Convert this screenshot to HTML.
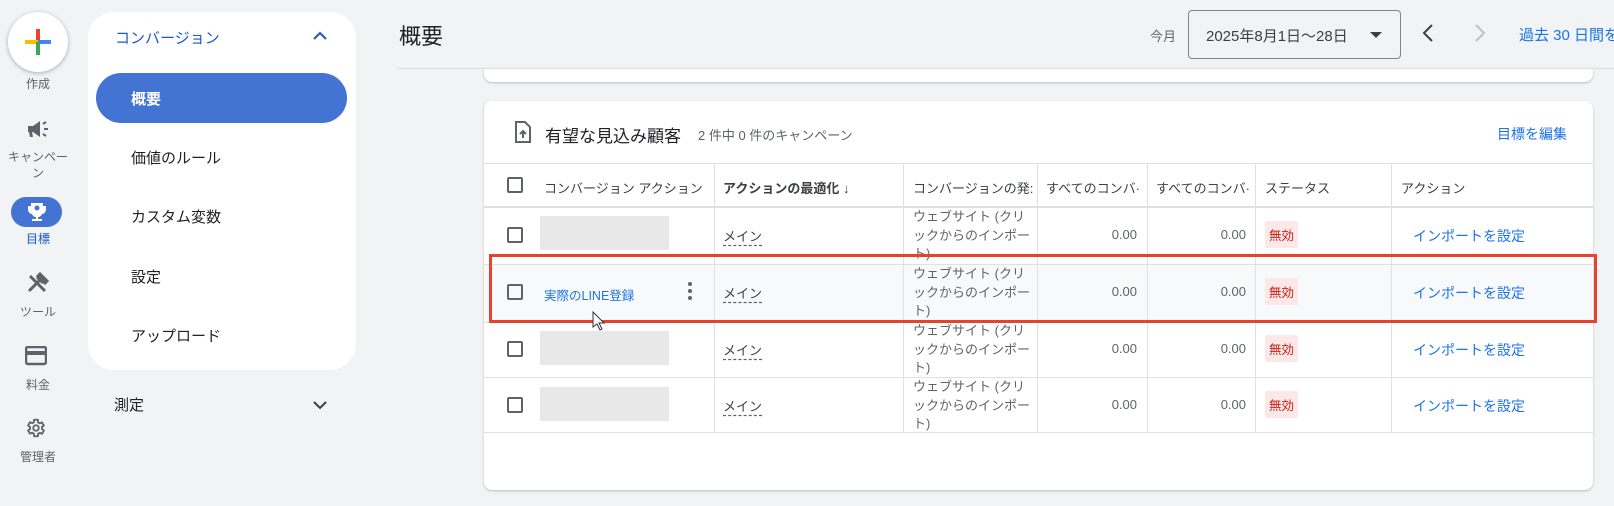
<!DOCTYPE html>
<html><head><meta charset="utf-8">
<style>
*{box-sizing:border-box;margin:0;padding:0}
body{width:1614px;height:506px;overflow:hidden;background:#f1f3f4;font-family:"Liberation Sans","Noto Sans CJK JP",sans-serif;color:#3c4043;position:relative}
.a{position:absolute}
.t{position:absolute;white-space:nowrap}
.lbl{font-size:12px;color:#5f6368;text-align:center;width:76px;left:0}
.nav{left:88px;top:12px;width:268px;height:358px;background:#fff;border-radius:26px}
.item{font-size:15px;color:#202124;left:131px}
.card{background:#fff;border-radius:8px;box-shadow:0 1px 2px rgba(60,64,67,.3)}
.hl{position:absolute;left:484px;width:1109px;height:1px;background:#e0e0e0}
.vl{position:absolute;width:1px;background:#e0e0e0}
.cb{position:absolute;width:16px;height:16px;border:2px solid #5f6368;border-radius:2px;left:507px}
.th{font-size:13px;color:#3c4043}
.td{font-size:13px;color:#3c4043}
.web{font-size:13px;color:#5f6368;line-height:18.5px;white-space:normal;width:118px;word-break:break-all}
.num{font-size:13px;color:#5f6368;text-align:right}
.badge{position:absolute;background:#fce8e6;color:#c5221f;font-size:12.5px;padding:4px 4px;border-radius:2px}
.imp{font-size:14px;color:#1a73e8}
.main{text-decoration:underline dashed #5f6368;text-underline-offset:4px}
.ph{position:absolute;left:540px;width:129px;height:34px;background:#e8e8e8}
</style></head><body>

<!-- left rail -->
<div class="a" style="left:8px;top:12px;width:60px;height:60px;border-radius:50%;background:#fff;box-shadow:0 1px 4px rgba(0,0,0,.3)"></div>
<div class="a" style="left:36px;top:29px;width:4px;height:13px;background:#ea4335"></div>
<div class="a" style="left:25px;top:40px;width:13px;height:4px;background:#fbbc04"></div>
<div class="a" style="left:38px;top:40px;width:13px;height:4px;background:#4285f4"></div>
<div class="a" style="left:36px;top:42px;width:4px;height:13px;background:#34a853"></div>
<div class="t lbl" style="top:75px">作成</div>
<svg class="a" style="left:26px;top:120px" width="24" height="20" viewBox="0 0 24 20"><path d="M2 6h5l7-5v16l-7-5H6l1 5H4l-1-5H2z" fill="#5f6368"/><path d="M17 4l3-2M18 9h4M17 14l3 2" stroke="#5f6368" stroke-width="2"/></svg>
<div class="t lbl" style="top:149px;line-height:16px">キャンペー<br>ン</div>
<div class="a" style="left:11px;top:197px;width:51px;height:30px;border-radius:15px;background:#4374d4"></div>
<svg class="a" style="left:26px;top:201px" width="22" height="22" viewBox="0 0 22 22"><path d="M5 2h12v3h3v3c0 3-2 5-4 5-1 2-2 3-4 3v2h4v2H6v-2h4v-2c-2 0-3-1-4-3-2 0-4-2-4-5V5h3z" fill="#fff"/><circle cx="11" cy="7" r="2.5" fill="#4374d4"/></svg>
<div class="t lbl" style="top:230px;color:#1a57c8">目標</div>
<svg class="a" style="left:26px;top:272px" width="24" height="22" viewBox="0 0 24 22"><path d="M3 19L13 9M11 5l6 6M14 2l7 7-2 2-7-7z" stroke="#5f6368" stroke-width="3" fill="none"/><path d="M4 4l15 15" stroke="#5f6368" stroke-width="3"/></svg>
<div class="t lbl" style="top:303px">ツール</div>
<svg class="a" style="left:25px;top:346px" width="22" height="20" viewBox="0 0 22 20"><rect x="1" y="1" width="20" height="17" rx="2" fill="none" stroke="#5f6368" stroke-width="2.5"/><rect x="1" y="5" width="20" height="4" fill="#5f6368"/></svg>
<div class="t lbl" style="top:376px">料金</div>
<svg class="a" style="left:25px;top:417px" width="22" height="22" viewBox="0 0 24 24"><path d="M19.4 13a7.6 7.6 0 000-2l2.1-1.6-2-3.5-2.5 1a7 7 0 00-1.7-1L15 3h-4l-.4 2.7a7 7 0 00-1.7 1l-2.5-1-2 3.5L6.5 11a7.6 7.6 0 000 2l-2.1 1.6 2 3.5 2.5-1a7 7 0 001.7 1L11 21h4l.4-2.7a7 7 0 001.7-1l2.5 1 2-3.5z" fill="none" stroke="#5f6368" stroke-width="2" transform="translate(-1,0)"/><circle cx="12" cy="12" r="3" fill="none" stroke="#5f6368" stroke-width="2"/></svg>
<div class="t lbl" style="top:448px">管理者</div>

<!-- nav -->
<div class="a nav"></div>
<div class="t" style="left:115px;top:27px;font-size:15px;color:#1a57c8">コンバージョン</div>
<svg class="a" style="left:312px;top:31px" width="16" height="10" viewBox="0 0 16 10"><path d="M2 8l6-6 6 6" stroke="#1a57c8" stroke-width="2" fill="none"/></svg>
<div class="a" style="left:96px;top:73px;width:251px;height:50px;border-radius:25px;background:#4374d4"></div>
<div class="t" style="left:131px;top:88px;font-size:15px;color:#fff;font-weight:bold">概要</div>
<div class="t item" style="top:147px">価値のルール</div>
<div class="t item" style="top:206px">カスタム変数</div>
<div class="t item" style="top:266px">設定</div>
<div class="t item" style="top:325px">アップロード</div>
<div class="t" style="left:114px;top:394px;font-size:15px;color:#202124">測定</div>
<svg class="a" style="left:312px;top:400px" width="16" height="10" viewBox="0 0 16 10"><path d="M2 2l6 6 6-6" stroke="#3c4043" stroke-width="2" fill="none"/></svg>

<!-- upper card remnant -->
<div class="a card" style="left:484px;top:69px;width:1109px;height:13px;border-radius:0 0 8px 8px"></div>

<!-- header -->
<div class="t" style="left:399px;top:19px;font-size:22px;color:#202124">概要</div>
<div class="a" style="left:397px;top:68px;width:1217px;height:1px;background:#dadce0"></div>
<div class="t" style="left:1150px;top:26px;font-size:13px;color:#5f6368">今月</div>
<div class="a" style="left:1188px;top:10px;width:213px;height:49px;border:1px solid #80868b;border-radius:4px"></div>
<div class="t" style="left:1206px;top:25px;font-size:15px;color:#3c4043">2025年8月1日〜28日</div>
<div class="a" style="left:1370px;top:32px;border-left:6px solid transparent;border-right:6px solid transparent;border-top:6px solid #3c4043"></div>
<svg class="a" style="left:1421px;top:23px" width="14" height="20" viewBox="0 0 14 20"><path d="M11 2L3 10l8 8" stroke="#3c4043" stroke-width="2" fill="none"/></svg>
<svg class="a" style="left:1473px;top:23px" width="14" height="20" viewBox="0 0 14 20"><path d="M3 2l8 8-8 8" stroke="#bdc1c6" stroke-width="2" fill="none"/></svg>
<div class="t" style="left:1519px;top:24px;font-size:15px;color:#1a73e8">過去 30 日間を</div>

<!-- main card -->
<div class="a card" style="left:484px;top:101px;width:1109px;height:389px"></div>
<svg class="a" style="left:514px;top:121px" width="18" height="22" viewBox="0 0 18 22"><path d="M2 1h9l5 5v15H2z" fill="none" stroke="#5f6368" stroke-width="2"/><path d="M9 17V10M6 13l3-3 3 3" stroke="#5f6368" stroke-width="2" fill="none"/></svg>
<div class="t" style="left:545px;top:122px;font-size:17px;color:#202124">有望な見込み顧客</div>
<div class="t" style="left:698px;top:125px;font-size:13px;color:#5f6368">2 件中 0 件のキャンペーン</div>
<div class="t" style="left:1497px;top:124px;font-size:14px;color:#1a73e8">目標を編集</div>

<div class="a" style="left:484px;top:265px;width:1109px;height:57px;background:#f8f9fa"></div>
<div class="hl" style="top:163px"></div>
<div class="hl" style="top:206px;height:2px"></div>
<div class="hl" style="top:264px"></div>
<div class="hl" style="top:322px"></div>
<div class="hl" style="top:377px"></div>
<div class="hl" style="top:432px"></div>
<div class="vl" style="left:714px;top:163px;height:269px"></div>
<div class="vl" style="left:903px;top:163px;height:269px"></div>
<div class="vl" style="left:1037px;top:163px;height:269px"></div>
<div class="vl" style="left:1147px;top:163px;height:269px"></div>
<div class="vl" style="left:1255px;top:163px;height:269px"></div>
<div class="vl" style="left:1391px;top:163px;height:269px"></div>

<div class="cb" style="top:177px"></div>
<div class="t th" style="left:544px;top:178px">コンバージョン アクション</div>
<div class="t th" style="left:723px;top:178px;font-weight:bold">アクションの最適化 ↓</div>
<div class="t th" style="left:913px;top:178px;width:122px;overflow:hidden">コンバージョンの発:</div>
<div class="t th" style="left:1046px;top:178px;width:96px;overflow:hidden">すべてのコンバ·</div>
<div class="t th" style="left:1156px;top:178px;width:96px;overflow:hidden">すべてのコンバ·</div>
<div class="t th" style="left:1265px;top:178px">ステータス</div>
<div class="t th" style="left:1401px;top:178px">アクション</div>

<!-- rows -->
<div class="cb" style="top:227px"></div><div class="ph" style="top:216px"></div>
<div class="cb" style="top:284px"></div>
<div class="cb" style="top:341px"></div><div class="ph" style="top:331px"></div>
<div class="cb" style="top:397px"></div><div class="ph" style="top:387px"></div>
<div class="t" style="left:544px;top:285px;font-size:12.5px;color:#1a73e8">実際のLINE登録</div>
<svg class="a" style="left:687px;top:281px" width="6" height="20"><circle cx="3" cy="3" r="2" fill="#5f6368"/><circle cx="3" cy="10" r="2" fill="#5f6368"/><circle cx="3" cy="17" r="2" fill="#5f6368"/></svg>

<div class="t td main" style="left:723px;top:283px">メイン</div>
<div class="t td main" style="left:723px;top:226px">メイン</div>
<div class="t td main" style="left:723px;top:340px">メイン</div>
<div class="t td main" style="left:723px;top:396px">メイン</div>

<div class="a web" style="left:913px;top:208px">ウェブサイト (クリックからのインポート)</div>
<div class="a web" style="left:913px;top:265px">ウェブサイト (クリックからのインポート)</div>
<div class="a web" style="left:913px;top:322px">ウェブサイト (クリックからのインポート)</div>
<div class="a web" style="left:913px;top:378px">ウェブサイト (クリックからのインポート)</div>

<div class="t num" style="left:1077px;width:60px;top:227px">0.00</div><div class="t num" style="left:1186px;width:60px;top:227px">0.00</div>
<div class="t num" style="left:1077px;width:60px;top:284px">0.00</div><div class="t num" style="left:1186px;width:60px;top:284px">0.00</div>
<div class="t num" style="left:1077px;width:60px;top:341px">0.00</div><div class="t num" style="left:1186px;width:60px;top:341px">0.00</div>
<div class="t num" style="left:1077px;width:60px;top:397px">0.00</div><div class="t num" style="left:1186px;width:60px;top:397px">0.00</div>

<div class="badge" style="left:1265px;top:221px">無効</div>
<div class="badge" style="left:1265px;top:278px">無効</div>
<div class="badge" style="left:1265px;top:335px">無効</div>
<div class="badge" style="left:1265px;top:391px">無効</div>

<div class="t imp" style="left:1413px;top:226px">インポートを設定</div>
<div class="t imp" style="left:1413px;top:283px">インポートを設定</div>
<div class="t imp" style="left:1413px;top:340px">インポートを設定</div>
<div class="t imp" style="left:1413px;top:396px">インポートを設定</div>

<!-- red highlight -->
<div class="a" style="left:489px;top:254px;width:1108px;height:69px;border:3px solid #e8412c"></div>
<svg class="a" style="left:592px;top:311px" width="14" height="20" viewBox="0 0 14 20"><path d="M1 1v15l4-3 3 6 2-1-3-6h5z" fill="#fff" stroke="#333" stroke-width="1"/></svg>
</body></html>
